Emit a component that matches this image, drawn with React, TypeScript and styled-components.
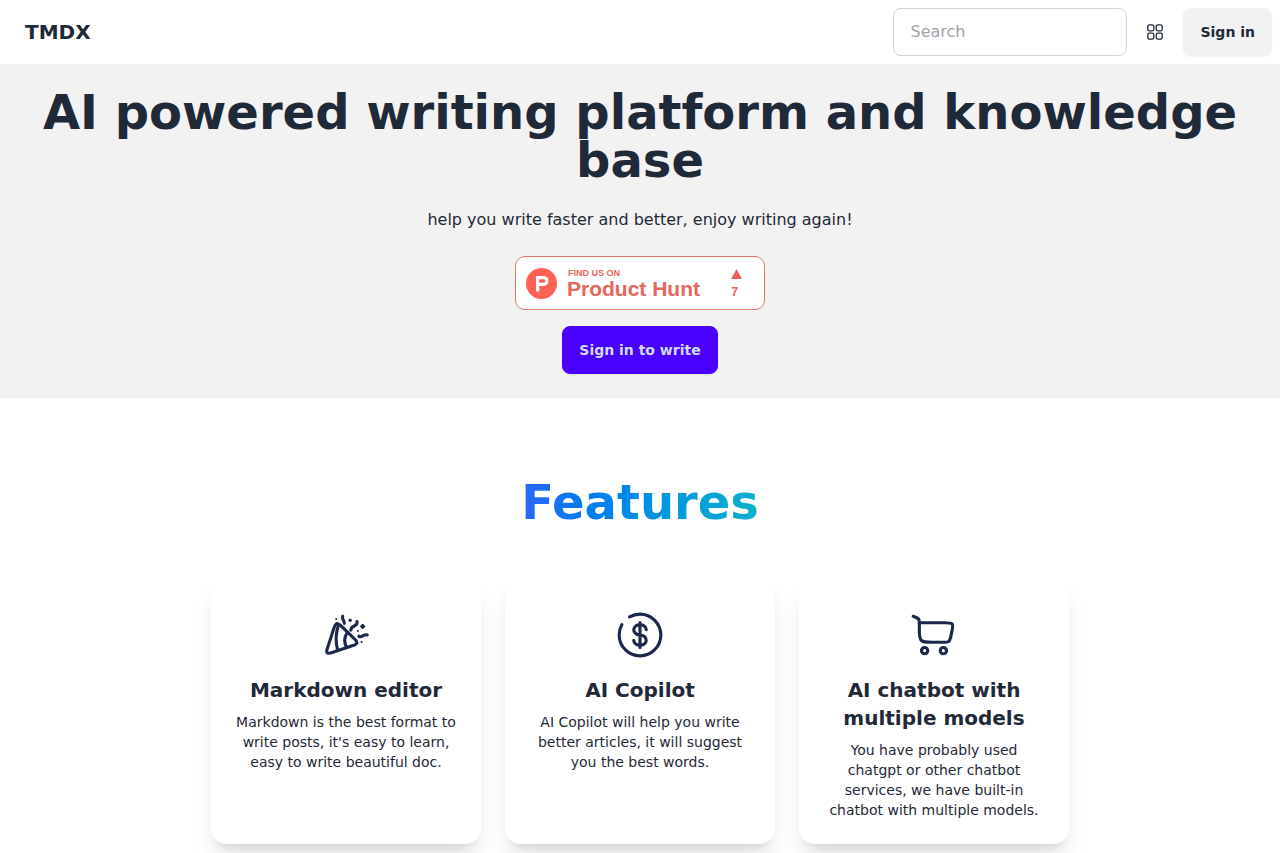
import React from "react";
import styled, { createGlobalStyle } from "styled-components";

const GlobalStyle = createGlobalStyle`
  *, *::before, *::after { box-sizing: border-box; }
  body {
    margin: 0;
    background: #ffffff;
    color: #1f2937;
    font-family: "DejaVu Sans", sans-serif;
    font-size: 16px;
    line-height: 24px;
  }
  h1, h2, h3, p { margin: 0; }
`;

const Navbar = styled.header`
  display: flex;
  align-items: center;
  justify-content: space-between;
  min-height: 64px;
  padding: 8px;
`;

const Brand = styled.a`
  padding: 0 17px;
  font-size: 20px;
  line-height: 28px;
  font-weight: 700;
  color: inherit;
  text-decoration: none;
`;

const NavActions = styled.div`
  display: flex;
  align-items: center;
  gap: 4px;
`;

const SearchInput = styled.input`
  width: 234px;
  height: 48px;
  padding: 0 16px 2px;
  border: 1px solid #d2d4d7;
  border-radius: 8px;
  background: #ffffff;
  color: inherit;
  font: inherit;
  &::placeholder {
    color: #a0a5ab;
    opacity: 1;
  }
`;

const Button = styled.button<{ $variant: "neutral" | "primary" | "ghost" }>`
  display: inline-flex;
  align-items: center;
  justify-content: center;
  height: 48px;
  min-width: 48px;
  padding: 0 ${(p) => (p.$variant === "ghost" ? "0" : "16px")};
  border: 1px solid
    ${(p) =>
      p.$variant === "primary" ? "#4a00ff" : p.$variant === "neutral" ? "#f2f2f2" : "transparent"};
  border-radius: 8px;
  background: ${(p) =>
    p.$variant === "primary" ? "#4a00ff" : p.$variant === "neutral" ? "#f2f2f2" : "transparent"};
  color: ${(p) => (p.$variant === "primary" ? "#d1dbff" : "#1f2937")};
  box-shadow: ${(p) => (p.$variant === "ghost" ? "none" : "0 1px 2px rgba(0, 0, 0, 0.05)")};
  font-family: inherit;
  font-size: 14px;
  line-height: 14px;
  font-weight: 700;
  cursor: pointer;
`;

const Hero = styled.section`
  display: flex;
  flex-direction: column;
  align-items: center;
  padding: 24px 16px;
  background: #f2f2f2;
  text-align: center;
`;

const HeroTitle = styled.h1`
  font-size: 48px;
  line-height: 48px;
  font-weight: 700;
`;

const HeroText = styled.p`
  padding: 24px 0;
`;

const Badge = styled.a`
  display: flex;
  align-items: center;
  width: 250px;
  height: 54px;
  margin-bottom: 16px;
  padding: 0 22px 0 10px;
  border: 1px solid #e2766d;
  border-radius: 10px;
  background: #ffffff;
  color: #e8665b;
  font-family: "Liberation Sans", Arial, sans-serif;
  font-weight: 700;
  text-align: left;
  text-decoration: none;
`;

const BadgeLabel = styled.span`
  display: flex;
  flex: 1;
  flex-direction: column;
  padding-left: 10px;
`;

const BadgeKicker = styled.span`
  padding-left: 1px;
  font-size: 9px;
  line-height: 12px;
`;

const BadgeName = styled.span`
  font-size: 21px;
  line-height: 20px;
  white-space: nowrap;
`;

const Votes = styled.span`
  display: flex;
  flex-direction: column;
  gap: 5px;
  padding-top: 3px;
  font-size: 13px;
  line-height: 16px;
`;

const Features = styled.section`
  display: flex;
  flex-direction: column;
  align-items: center;
  gap: 44px;
  padding: 80px 16px;
`;

const FeaturesTitle = styled.h2`
  font-size: 48px;
  line-height: 48px;
  font-weight: 700;
  background: linear-gradient(to right, #2b66f8, #007eed 30%, #0095e3 60%, #0cb2cb);
  background-clip: text;
  -webkit-background-clip: text;
  color: transparent;
`;

const CardGrid = styled.div`
  display: grid;
  grid-template-columns: repeat(3, minmax(0, 270px));
  justify-content: center;
  gap: 24px;
  width: 100%;
`;

const Card = styled.article`
  display: flex;
  flex-direction: column;
  align-items: center;
  padding: 40px 24px 24px;
  border-radius: 16px;
  background: #ffffff;
  text-align: center;
  box-shadow: 0 20px 25px -5px rgba(0, 0, 0, 0.1), 0 8px 10px -6px rgba(0, 0, 0, 0.1);
`;

const CardIcon = styled.svg`
  width: 50px;
  height: 50px;
  margin-bottom: 16px;
  fill: none;
  stroke: #1c274c;
  stroke-width: 1.5;
  stroke-linecap: round;
  stroke-linejoin: round;
`;

const CardTitle = styled.h3`
  margin-bottom: 8px;
  font-size: 20px;
  line-height: 28px;
  font-weight: 700;
`;

const CardText = styled.p`
  font-size: 14px;
  line-height: 20px;
`;

const GridIcon = () => (
  <svg width="16" height="16" viewBox="0 0 16 16" fill="none" stroke="currentColor" strokeWidth="1.3" aria-hidden="true">
    <rect x="0.8" y="0.8" width="6" height="6" rx="1.6" />
    <rect x="9.2" y="0.8" width="6" height="6" rx="1.6" />
    <rect x="0.8" y="9.2" width="6" height="6" rx="1.6" />
    <rect x="9.2" y="9.2" width="6" height="6" rx="1.6" />
  </svg>
);

const ProductHuntLogo = () => (
  <svg width="31" height="31" viewBox="0 0 31 31" aria-hidden="true">
    <circle cx="15.5" cy="15.5" r="15.5" fill="#ff6154" />
    <path
      fill="#ffffff"
      fillRule="evenodd"
      d="M10 8h7.6a5 5 0 0 1 0 10h-4.4v5.4H10zM13.2 11.2v3.6h4.4a1.8 1.8 0 0 0 0-3.6z"
    />
  </svg>
);

const ConfettiIcon = () => (
  <CardIcon viewBox="0 0 24 24" aria-hidden="true">
    <path d="M3.3 17.7 6 9.3c.6-1.8.9-2.6 1.6-2.8.7-.2 1.3.4 2.4 1.5l5.7 5.5c1.2 1.1 1.7 1.7 1.5 2.4-.2.7-1 .9-2.6 1.4l-8.9 3c-1.5.5-2.3.7-2.8.2-.5-.5-.2-1.2.4-2.8Z" />
    <path d="M8.4 7.2c-1.4 4-1.5 8-.4 12.2M12.6 10.8c-1.5 2.3-1.6 4.6-.4 7" />
    <path d="M10.4 3c-.6 1.5.8 1.8.8 3.4M17.3 5.6c.3 2.9-2.8 1.3-3 4.1M18.2 12.6c1.6.8 2-1.2 4-.6" />
    <g fill="#1c274c" stroke="none">
      <circle cx="7.3" cy="4.3" r="0.5" />
      <circle cx="17.7" cy="10.1" r="0.5" />
      <circle cx="19.5" cy="15.4" r="0.5" />
      <circle cx="14" cy="4.9" r="0.8" />
      <rect x="19" y="6.9" width="2" height="2" rx="0.4" transform="rotate(45 20 7.9)" />
    </g>
  </CardIcon>
);

const DollarIcon = () => (
  <CardIcon viewBox="0 0 24 24" aria-hidden="true">
    <path d="M12 6v12M15 9.5C15 8.12 13.66 7 12 7S9 8.12 9 9.5s1.34 2.5 3 2.5 3 1.12 3 2.5-1.34 2.5-3 2.5-3-1.12-3-2.5" />
    <path d="M7 3.34A9.95 9.95 0 0 1 12 2c5.52 0 10 4.48 10 10s-4.48 10-10 10S2 17.52 2 12c0-1.82.49-3.53 1.34-5" />
  </CardIcon>
);

const CartIcon = () => (
  <CardIcon viewBox="0 0 24 24" aria-hidden="true">
    <circle cx="7.5" cy="19.5" r="1.5" />
    <circle cx="16.5" cy="19.5" r="1.5" />
    <path d="M2 3l.26.09c1.3.46 1.95.69 2.33 1.23.37.55.37 1.27.37 2.72v2.72c0 2.94.06 3.91.93 4.83.86.91 2.26.91 5.05.91h5.3c1.56 0 2.34 0 2.89-.45s.71-1.21 1.03-2.74l.5-2.43c.34-1.74.52-2.61.07-3.18-.44-.58-1.96-.58-3.64-.58H4.96" />
  </CardIcon>
);

const features = [
  {
    Icon: ConfettiIcon,
    title: "Markdown editor",
    text: "Markdown is the best format to write posts, it's easy to learn, easy to write beautiful doc.",
  },
  {
    Icon: DollarIcon,
    title: "AI Copilot",
    text: "AI Copilot will help you write better articles, it will suggest you the best words.",
  },
  {
    Icon: CartIcon,
    title: "AI chatbot with multiple models",
    text: "You have probably used chatgpt or other chatbot services, we have built-in chatbot with multiple models.",
  },
];

export default function App() {
  return (
    <>
      <GlobalStyle />
      <Navbar>
        <Brand href="#">TMDX</Brand>
        <NavActions>
          <SearchInput type="text" placeholder="Search" aria-label="Search" />
          <Button $variant="ghost" type="button" aria-label="Apps">
            <GridIcon />
          </Button>
          <Button $variant="neutral" type="button">Sign in</Button>
        </NavActions>
      </Navbar>
      <main>
        <Hero>
          <HeroTitle>AI powered writing platform and knowledge base</HeroTitle>
          <HeroText>help you write faster and better, enjoy writing again!</HeroText>
          <Badge href="#">
            <ProductHuntLogo />
            <BadgeLabel>
              <BadgeKicker>FIND US ON</BadgeKicker>
              <BadgeName>Product Hunt</BadgeName>
            </BadgeLabel>
            <Votes>
              <svg width="11" height="10" viewBox="0 0 11 10" aria-hidden="true">
                <path d="M5.5 0 11 10H0Z" fill="#f0605a" />
              </svg>
              <span>7</span>
            </Votes>
          </Badge>
          <Button $variant="primary" type="button">Sign in to write</Button>
        </Hero>
        <Features>
          <FeaturesTitle>Features</FeaturesTitle>
          <CardGrid>
            {features.map(({ Icon, title, text }) => (
              <Card key={title}>
                <Icon />
                <CardTitle>{title}</CardTitle>
                <CardText>{text}</CardText>
              </Card>
            ))}
          </CardGrid>
        </Features>
      </main>
    </>
  );
}
